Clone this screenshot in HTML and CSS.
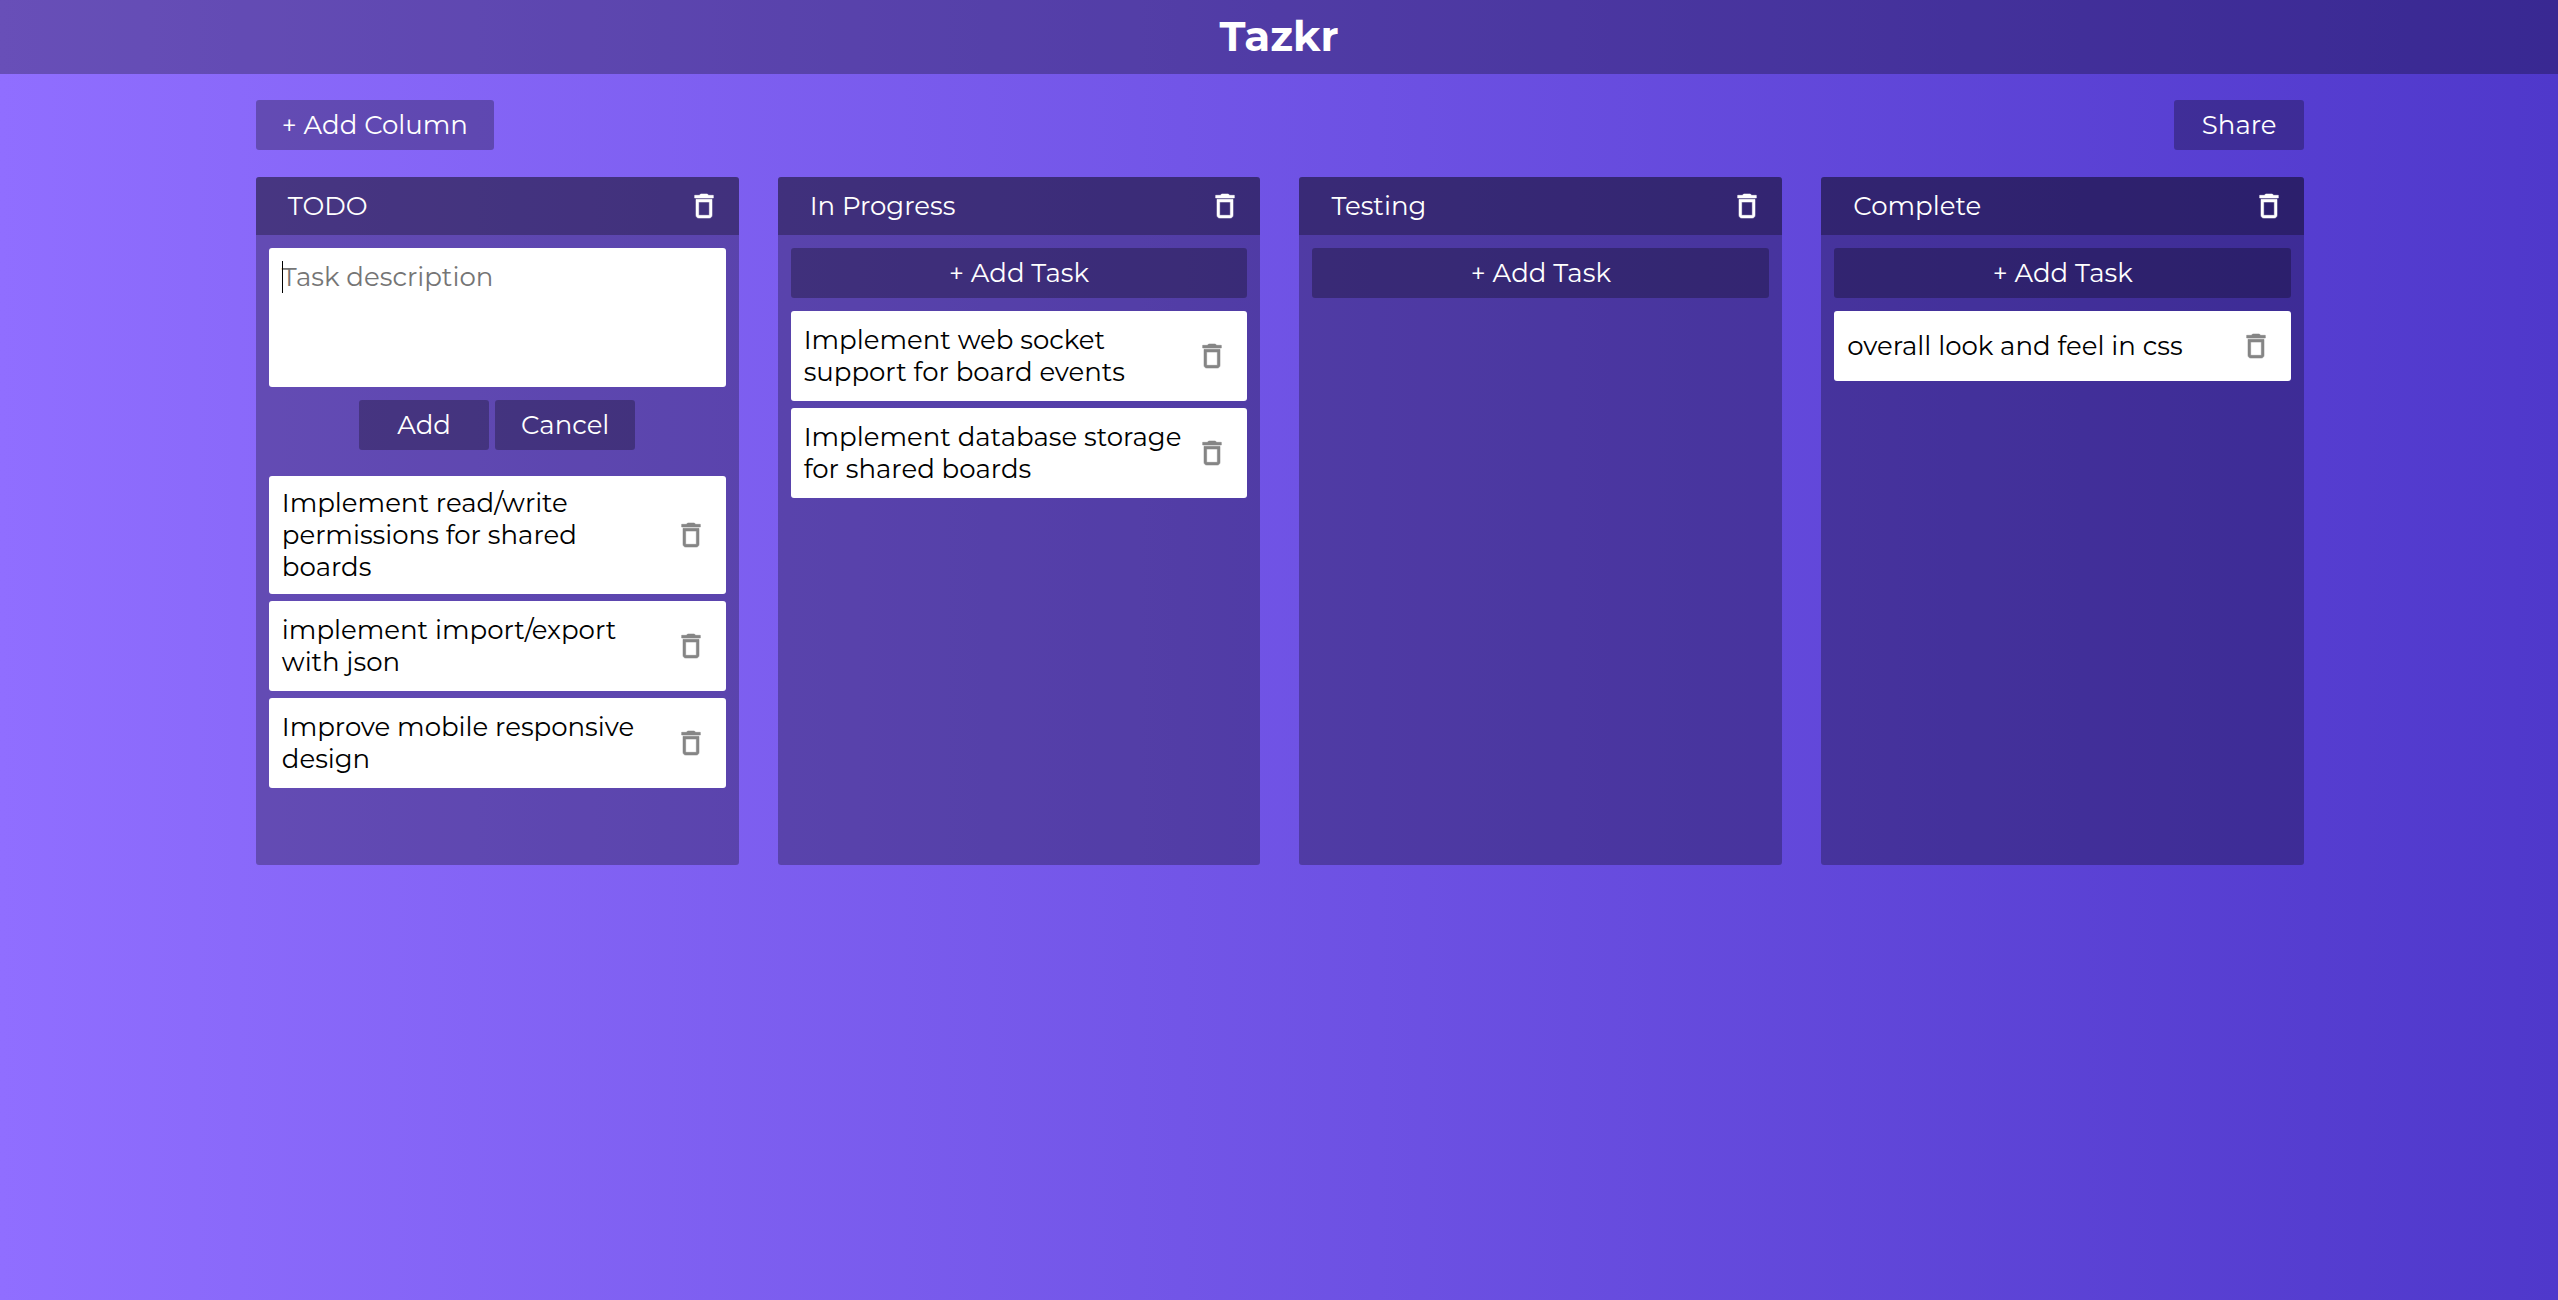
FILE: index.html
```html
<!DOCTYPE html>
<html lang="en">
<head>
  <meta charset="utf-8">
  <meta name="viewport" content="width=device-width, initial-scale=1">
  <title>Tazkr</title>
  <link rel="stylesheet" href="styles.css">
</head>
<body>
  <svg class="sprite" aria-hidden="true">
    <symbol id="trash" viewBox="0 0 24 24">
      <path d="M6 19c0 1.100.9 2 2 2h8c1.100 0 2-.9 2-2V7H6v12zM8 9h8v10H8V9zm7.500-5l-1-1h-5l-1 1H5v2h14V4z"/>
    </symbol>
  </svg>

  <header class="navbar">
    <h1 class="brand">Tazkr</h1>
  </header>

  <main class="container">
    <div class="toolbar">
      <button class="btn" type="button">+ Add Column</button>
      <button class="btn" type="button">Share</button>
    </div>

    <div class="board">
      <section class="column">
        <header class="column-header">
          <h2 class="column-title">TODO</h2>
          <button class="icon-btn" type="button" aria-label="Delete column TODO"><svg class="icon"><use href="#trash"/></svg></button>
        </header>
        <div class="column-body">
          <form class="task-form">
            <div class="task-field">
              <textarea class="task-input" placeholder="Task description" aria-label="Task description"></textarea>
            </div>
            <div class="form-actions">
              <button class="btn" type="submit">Add</button>
              <button class="btn" type="button">Cancel</button>
            </div>
          </form>
          <ul class="tasks">
            <li class="task task-long">
              <p class="task-text">Implement read/write permissions for shared boards</p>
              <button class="icon-btn icon-muted" type="button" aria-label="Delete task"><svg class="icon"><use href="#trash"/></svg></button>
            </li>
            <li class="task">
              <p class="task-text">implement import/export with json</p>
              <button class="icon-btn icon-muted" type="button" aria-label="Delete task"><svg class="icon"><use href="#trash"/></svg></button>
            </li>
            <li class="task">
              <p class="task-text">Improve mobile responsive design</p>
              <button class="icon-btn icon-muted" type="button" aria-label="Delete task"><svg class="icon"><use href="#trash"/></svg></button>
            </li>
          </ul>
        </div>
      </section>

      <section class="column">
        <header class="column-header">
          <h2 class="column-title">In Progress</h2>
          <button class="icon-btn" type="button" aria-label="Delete column In Progress"><svg class="icon"><use href="#trash"/></svg></button>
        </header>
        <div class="column-body">
          <button class="btn" type="button">+ Add Task</button>
          <ul class="tasks">
            <li class="task">
              <p class="task-text">Implement web socket support for board events</p>
              <button class="icon-btn icon-muted" type="button" aria-label="Delete task"><svg class="icon"><use href="#trash"/></svg></button>
            </li>
            <li class="task">
              <p class="task-text">Implement database storage for shared boards</p>
              <button class="icon-btn icon-muted" type="button" aria-label="Delete task"><svg class="icon"><use href="#trash"/></svg></button>
            </li>
          </ul>
        </div>
      </section>

      <section class="column">
        <header class="column-header">
          <h2 class="column-title">Testing</h2>
          <button class="icon-btn" type="button" aria-label="Delete column Testing"><svg class="icon"><use href="#trash"/></svg></button>
        </header>
        <div class="column-body">
          <button class="btn" type="button">+ Add Task</button>
        </div>
      </section>

      <section class="column">
        <header class="column-header">
          <h2 class="column-title">Complete</h2>
          <button class="icon-btn" type="button" aria-label="Delete column Complete"><svg class="icon"><use href="#trash"/></svg></button>
        </header>
        <div class="column-body">
          <button class="btn" type="button">+ Add Task</button>
          <ul class="tasks">
            <li class="task">
              <p class="task-text">overall look and feel in css</p>
              <button class="icon-btn icon-muted" type="button" aria-label="Delete task"><svg class="icon"><use href="#trash"/></svg></button>
            </li>
          </ul>
        </div>
      </section>
    </div>
  </main>
</body>
</html>
```
FILE: styles.css
```css
* {
  box-sizing: border-box;
}

body {
  margin: 0;
  min-height: 100vh;
  background: linear-gradient(to right, #906eff, #4f38cb);
  color: #fff;
  font-family: Montserrat, Inter, "Noto Sans", sans-serif;
  font-size: 26px;
  line-height: 32px;
}

h1,
h2,
p,
ul {
  margin: 0;
  padding: 0;
}

button,
textarea {
  font: inherit;
}

.sprite {
  display: none;
}

.navbar {
  padding: 11px 12px 13px;
  background: rgba(0, 0, 0, 0.28);
  text-align: center;
}

.brand {
  font-size: 42px;
  line-height: 50px;
  font-weight: 700;
}

.container {
  width: calc(80% + 2px);
  margin: 0 auto 0 10%;
  padding: 26px 0;
}

.toolbar {
  display: flex;
  justify-content: space-between;
  margin-bottom: 27px;
}

.btn {
  min-width: 130px;
  height: 50px;
  padding: 0 26px;
  border: 0;
  border-radius: 3px;
  background: rgba(0, 0, 0, 0.28);
  color: #fff;
  cursor: pointer;
}

.board {
  display: grid;
  grid-template-columns: repeat(4, 1fr);
  gap: 39px;
}

.column {
  overflow: hidden;
  border-radius: 3px;
  background: rgba(0, 0, 0, 0.28);
}

.column-header {
  display: flex;
  align-items: center;
  justify-content: space-between;
  height: 58px;
  padding: 0 19px 0 32px;
  background: rgba(0, 0, 0, 0.28);
}

.column-title {
  font-size: 26px;
  font-weight: 400;
}

.column-body {
  display: flex;
  flex-direction: column;
  gap: 13px;
  padding: 13px 13px 77px;
}

.task-form {
  margin-bottom: 13px;
}

.task-field {
  position: relative;
}

/* Text cursor of the empty field */
.task-field::after {
  content: "";
  position: absolute;
  top: 13px;
  left: 13px;
  width: 1px;
  height: 32px;
  background: #000;
}

.task-input {
  display: block;
  width: 100%;
  height: 139px;
  padding: 13px;
  border: 0;
  border-radius: 3px;
  outline: 0;
  resize: none;
  background: #fff;
  color: #000;
}

.task-input::placeholder {
  color: #757575;
}

.form-actions {
  display: flex;
  justify-content: center;
  gap: 6px;
  margin-top: 13px;
}

.tasks {
  display: flex;
  flex-direction: column;
  gap: 7px;
  list-style: none;
}

.task {
  display: flex;
  align-items: center;
  gap: 6px;
  min-height: 70px;
  padding: 13px 19px 13px 13px;
  border-radius: 3px;
  background: #fff;
  color: #000;
}

.task-long {
  padding-top: 11px;
  padding-bottom: 11px;
}

.task-text {
  flex: 1;
}

.icon-btn {
  flex: none;
  width: 32px;
  height: 32px;
  padding: 0;
  border: 0;
  background: none;
  color: #fff;
  cursor: pointer;
}

.icon-muted {
  color: #858585;
}

.icon {
  display: block;
  width: 32px;
  height: 32px;
  fill: currentColor;
  stroke: currentColor;
  stroke-width: 0.4;
}
```
